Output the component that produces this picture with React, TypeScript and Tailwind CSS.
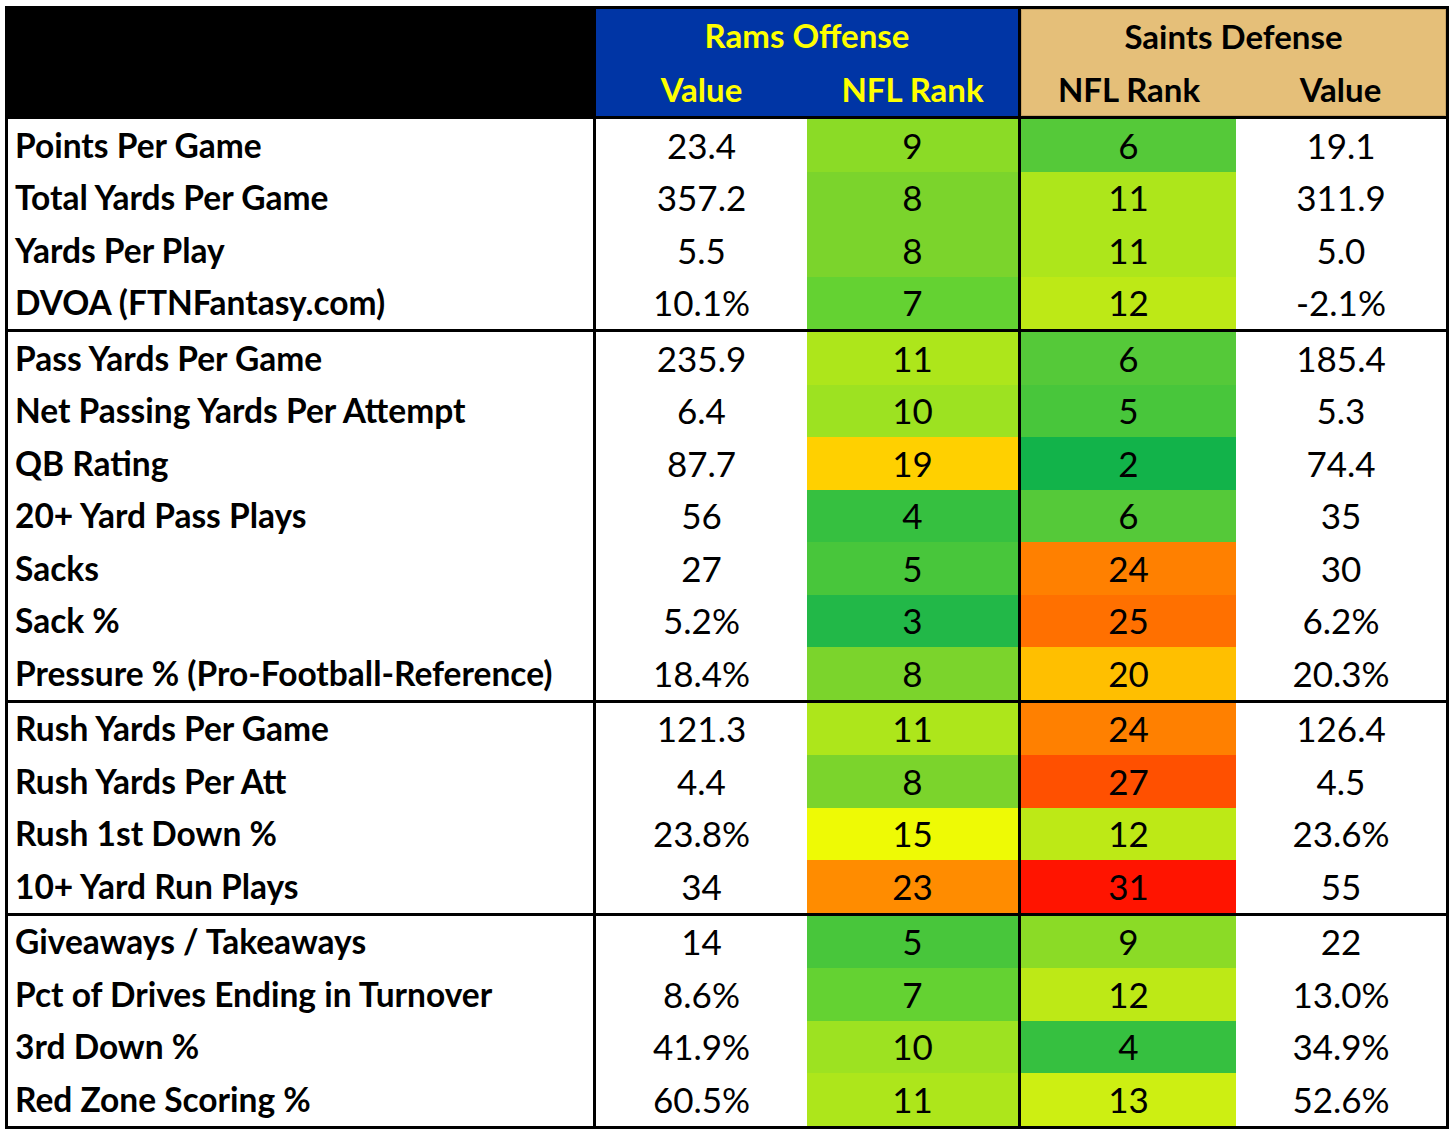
import React from "react";

type Row = { label: string; ov: string; or: string; oc: string; dr: string; dc: string; dv: string };

const sections: Row[][] = [
  [
    { label: "Points Per Game", ov: "23.4", or: "9", oc: "#8bdb26", dr: "6", dc: "#55c939", dv: "19.1" },
    { label: "Total Yards Per Game", ov: "357.2", or: "8", oc: "#7bd42c", dr: "11", dc: "#ade61b", dv: "311.9" },
    { label: "Yards Per Play", ov: "5.5", or: "8", oc: "#7bd42c", dr: "11", dc: "#ade61b", dv: "5.0" },
    { label: "DVOA (FTNFantasy.com)", ov: "10.1%", or: "7", oc: "#64d232", dr: "12", dc: "#bde916", dv: "-2.1%" },
  ],
  [
    { label: "Pass Yards Per Game", ov: "235.9", or: "11", oc: "#ade61b", dr: "6", dc: "#55c939", dv: "185.4" },
    { label: "Net Passing Yards Per Attempt", ov: "6.4", or: "10", oc: "#9de221", dr: "5", dc: "#48c63b", dv: "5.3" },
    { label: "QB Rating", ov: "87.7", or: "19", oc: "#ffd000", dr: "2", dc: "#12b34a", dv: "74.4" },
    { label: "20+ Yard Pass Plays", ov: "56", or: "4", oc: "#36c040", dr: "6", dc: "#55c939", dv: "35" },
    { label: "Sacks", ov: "27", or: "5", oc: "#48c63b", dr: "24", dc: "#ff8000", dv: "30" },
    { label: "Sack %", ov: "5.2%", or: "3", oc: "#22b848", dr: "25", dc: "#ff7000", dv: "6.2%" },
    { label: "Pressure % (Pro-Football-Reference)", ov: "18.4%", or: "8", oc: "#7bd42c", dr: "20", dc: "#ffbf00", dv: "20.3%" },
  ],
  [
    { label: "Rush Yards Per Game", ov: "121.3", or: "11", oc: "#ade61b", dr: "24", dc: "#ff8000", dv: "126.4" },
    { label: "Rush Yards Per Att", ov: "4.4", or: "8", oc: "#7bd42c", dr: "27", dc: "#ff5000", dv: "4.5" },
    { label: "Rush 1st Down %", ov: "23.8%", or: "15", oc: "#eefa05", dr: "12", dc: "#bde916", dv: "23.6%" },
    { label: "10+ Yard Run Plays", ov: "34", or: "23", oc: "#ff8c00", dr: "31", dc: "#ff1400", dv: "55" },
  ],
  [
    { label: "Giveaways / Takeaways", ov: "14", or: "5", oc: "#48c63b", dr: "9", dc: "#8bdb26", dv: "22" },
    { label: "Pct of Drives Ending in Turnover", ov: "8.6%", or: "7", oc: "#64d232", dr: "12", dc: "#bde916", dv: "13.0%" },
    { label: "3rd Down %", ov: "41.9%", or: "10", oc: "#9de221", dr: "4", dc: "#36c040", dv: "34.9%" },
    { label: "Red Zone Scoring %", ov: "60.5%", or: "11", oc: "#ade61b", dr: "13", dc: "#cdef12", dv: "52.6%" },
  ],
];

const font = { fontFamily: "Lato, 'Open Sans', sans-serif" };

function DataRow({ r }: { r: Row }) {
  return (
    <div className="flex h-[52.5px] text-[35px] leading-none text-black">
      <div className="w-[585px] flex items-center pl-[7px] font-bold bg-white text-[33.5px]">{r.label}</div>
      <div className="w-[3px] bg-black" />
      <div className="w-[211px] flex items-center justify-center bg-white">{r.ov}</div>
      <div className="w-[211px] flex items-center justify-center" style={{ backgroundColor: r.oc }}>{r.or}</div>
      <div className="w-[3px] bg-black" />
      <div className="w-[215px] flex items-center justify-center" style={{ backgroundColor: r.dc }}>{r.dr}</div>
      <div className="w-[210px] flex items-center justify-center bg-white">{r.dv}</div>
    </div>
  );
}

export default function App() {
  return (
    <div className="bg-white w-[1456px] h-[1136px] pl-[5px] pt-[6px]" style={font}>
      <div className="w-[1444px] border-[3px] border-black flex flex-col">
        <div className="flex h-[107px] text-[33px] font-bold leading-none">
          <div className="w-[588px] bg-black" />
          <div className="w-[422px] bg-[#0035a5] text-[#ffff00] flex flex-col">
            <div className="h-[53px] flex items-center justify-center">Rams Offense</div>
            <div className="flex-1 flex">
              <div className="w-[211px] flex items-center justify-center">Value</div>
              <div className="w-[211px] flex items-center justify-center">NFL Rank</div>
            </div>
          </div>
          <div className="w-[3px] bg-black" />
          <div className="w-[425px] bg-[#e5bf79] text-black flex flex-col border border-[#c9a463]">
            <div className="h-[53px] flex items-center justify-center">Saints Defense</div>
            <div className="flex-1 flex">
              <div className="w-[215px] flex items-center justify-center">NFL Rank</div>
              <div className="w-[210px] flex items-center justify-center">Value</div>
            </div>
          </div>
        </div>
        {sections.map((sec, i) => (
          <div key={i} className="border-t-[3px] border-black">
            {sec.map((r) => (
              <DataRow key={r.label} r={r} />
            ))}
          </div>
        ))}
      </div>
    </div>
  );
}
